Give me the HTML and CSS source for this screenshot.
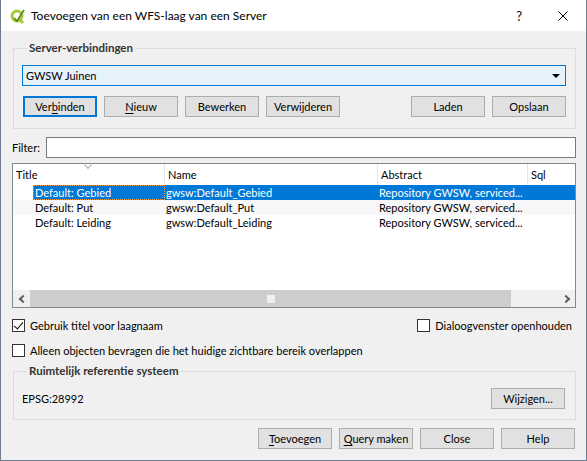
FILE: index.html
```html
<!DOCTYPE html>
<html>
<head>
<meta charset="utf-8">
<link rel="stylesheet" href="styles.css">
</head>
<body>
<div class="window">
  <div class="titlebar">
    <svg class="app-icon" width="16" height="16" viewBox="0 0 16 16">
      <circle cx="7" cy="8" r="5" fill="none" stroke="#a9c73b" stroke-width="3"/>
      <path d="M9 11 L13 15" stroke="#a9c73b" stroke-width="3"/>
      <path d="M4 10 L7 13 L14 2" fill="none" stroke="#4a8a1c" stroke-width="1.6"/>
    </svg>
    <span class="title">Toevoegen van een WFS-laag van een Server</span>
    <span class="help">?</span>
    <svg class="close" width="10" height="10" viewBox="0 0 10 10">
      <path d="M0.5 0.5 L9.5 9.5 M9.5 0.5 L0.5 9.5" stroke="#000" stroke-width="1"/>
    </svg>
  </div>
  <div class="content">
    <fieldset class="group server">
      <legend>Server-verbindingen</legend>
      <div class="combo"><span>GWSW Juinen</span><span class="arrow"></span></div>
      <div class="btnrow">
        <button class="btn default">Ver<u>b</u>inden</button>
        <button class="btn"><u>N</u>ieuw</button>
        <button class="btn">Bewerken</button>
        <button class="btn">Verwijderen</button>
        <span class="spacer"></span>
        <button class="btn">Laden</button>
        <button class="btn">Opslaan</button>
      </div>
    </fieldset>
    <div class="filter-row">
      <span class="label">Filter:</span>
      <div class="input"></div>
    </div>
    <div class="table">
      <div class="thead">
        <div class="th first">Title<span class="sort"></span></div>
        <div class="th">Name</div>
        <div class="th">Abstract</div>
        <div class="th last">Sql</div>
      </div>
      <div class="tbody">
        <div class="tr selected">
          <div class="td first"><span class="cell-focus">Default: Gebied</span></div>
          <div class="td">gwsw:Default_Gebied</div>
          <div class="td">Repository GWSW, serviced...</div>
          <div class="td"></div>
        </div>
        <div class="tr alt">
          <div class="td first"><span class="cell">Default: Put</span></div>
          <div class="td">gwsw:Default_Put</div>
          <div class="td">Repository GWSW, serviced...</div>
          <div class="td"></div>
        </div>
        <div class="tr">
          <div class="td first"><span class="cell">Default: Leiding</span></div>
          <div class="td">gwsw:Default_Leiding</div>
          <div class="td">Repository GWSW, serviced...</div>
          <div class="td"></div>
        </div>
      </div>
      <div class="hscroll">
        <span class="sb-arrow left"></span>
        <div class="sb-track">
          <div class="sb-thumb"><span class="grip"></span></div>
        </div>
        <span class="sb-arrow right"></span>
      </div>
    </div>
    <div class="check-row">
      <label class="check"><span class="box checked"></span>Gebruik titel voor laagnaam</label>
      <label class="check"><span class="box"></span>Dialoogvenster openhouden</label>
    </div>
    <div class="check-row second">
      <label class="check"><span class="box"></span>Alleen objecten bevragen die het huidige zichtbare bereik overlappen</label>
    </div>
    <fieldset class="group crs">
      <legend>Ruimtelijk referentie systeem</legend>
      <div class="crs-row">
        <span class="crs-code">EPSG:28992</span>
        <button class="btn">Wijzigen...</button>
      </div>
    </fieldset>
    <div class="footer">
      <button class="btn"><u>T</u>oevoegen</button>
      <button class="btn"><u>Q</u>uery maken</button>
      <button class="btn">Close</button>
      <button class="btn">Help</button>
    </div>
  </div>
</div>
</body>
</html>
```
FILE: styles.css
```css
* { box-sizing: border-box; }
html, body { margin: 0; padding: 0; background: #fff; }
body { font-family: Lato, "Liberation Sans", sans-serif; font-size: 11px; color: #000; }

.window {
  width: 587px;
  height: 461px;
  border: 1px solid #6f7c8e;
  border-top: none;
  background: #f0f0f0;
  display: flex;
  flex-direction: column;
}

.titlebar {
  height: 31px;
  background: #fff;
  display: flex;
  align-items: center;
  flex-shrink: 0;
}
.app-icon { margin-left: 9px; margin-right: 5px; }
.title { font-size: 12px; flex: 1; }
.help { font-size: 13px; margin-right: 36px; color: #000; }
.close { margin-right: 18px; }

.content {
  flex: 1;
  display: flex;
  flex-direction: column;
  padding: 0 10px 0 11px;
}

.group {
  margin: 0;
  border: 1px solid #dcdcdc;
  padding: 0;
  min-width: 0;
}
.group legend {
  font-weight: bold;
  color: #333;
  padding: 0 2px;
  margin-left: 5px;
  line-height: 16px;
  font-size: 11.5px;
}
.server { margin-top: 9px; margin-left: 1px; padding: 9px 9px 11px 8px; }

.combo {
  height: 21px;
  border: 1px solid #0078d7;
  background: #e5f1fb;
  display: flex;
  align-items: center;
  padding-left: 3px;
  padding-right: 5px;
}
.combo span:first-child { flex: 1; }
.arrow {
  width: 0; height: 0;
  border-left: 4px solid transparent;
  border-right: 4px solid transparent;
  border-top: 4px solid #000;
}

.btnrow { display: flex; gap: 7px; margin-top: 10px; padding-left: 1px; }
.spacer { flex: 1; }
.btn {
  width: 74px;
  height: 21px;
  border: 1px solid #adadad;
  background: #e1e1e1;
  font-family: inherit;
  font-size: 11px;
  color: #000;
  padding: 0;
  margin: 0;
  text-align: center;
  line-height: 19px;
}
.btn.default { border: 2px solid #0078d7; line-height: 17px; }
.btn u { text-decoration: underline; text-underline-offset: 2px; }

.filter-row { display: flex; align-items: center; margin-top: 8px; height: 21px; }
.label { width: 34px; }
.input { flex: 1; height: 21px; border: 1px solid #7a7a7a; background: #fff; }

.table {
  margin-top: 5px;
  height: 145px;
  border: 1px solid #828790;
  background: #fff;
  display: flex;
  flex-direction: column;
}
.thead, .tr {
  display: grid;
  grid-template-columns: 152px 213px 150px 1fr;
}
.thead { height: 21px; }
.th {
  position: relative;
  border-right: 1px solid #e5e5e5;
  padding-left: 3px;
  line-height: 21px;
}
.th.last { border-right: none; }
.sort {
  position: absolute;
  left: 72px;
  top: -2px;
  width: 6px; height: 6px;
  border-right: 1px solid #a0a0a0;
  border-bottom: 1px solid #a0a0a0;
  transform: rotate(45deg) scale(0.9, 0.9);
}
.tbody { flex: 1; }
.tr { height: 15px; line-height: 15px; }
.td { padding-left: 1px; white-space: nowrap; overflow: hidden; }
.td.first { padding-left: 20px; }
.cell, .cell-focus { display: block; padding-left: 2px; height: 15px; }
.tr.alt { background: #f7f7f7; }
.tr.selected { color: #fff; }
.tr.selected .td:not(.first) { background: #0078d7; }
.cell-focus { background: #0078d7; outline: 1px dotted #f0a040; outline-offset: -1px; }

.hscroll { height: 17px; display: flex; background: #f0f0f0; }
.sb-arrow { width: 17px; position: relative; }
.sb-arrow::after {
  content: "";
  position: absolute;
  top: 6px;
  width: 4px; height: 4px;
  border-left: 2px solid #606060;
  border-bottom: 2px solid #606060;
}
.sb-arrow.left::after { left: 7px; transform: rotate(45deg); }
.sb-arrow.right::after { left: 5px; transform: rotate(-135deg); }
.sb-track { flex: 1; display: flex; }
.sb-thumb { width: 481px; background: #cdcdcd; display: flex; align-items: center; justify-content: center; }
.grip { width: 8px; height: 8px; background: #f0f0f0; }

.check-row { display: flex; justify-content: space-between; height: 16px; margin-top: 9px; padding-right: 4px; }
.check-row.second { margin-top: 9px; }
.check { display: flex; align-items: center; gap: 5px; }
.box { width: 13px; height: 13px; border: 1px solid #333; background: #fff; position: relative; }
.box.checked::after {
  content: "";
  position: absolute;
  left: 3px; top: 0px;
  width: 4px; height: 8px;
  border-right: 1px solid #000;
  border-bottom: 1px solid #000;
  transform: rotate(40deg);
}

.crs { margin-top: 5px; margin-left: 1px; padding: 9px 10px 10px 8px; }
.crs-row { display: flex; align-items: center; justify-content: space-between; }

.footer { display: flex; justify-content: flex-end; gap: 7px; margin-top: 8px; padding-right: 1px; }
```
